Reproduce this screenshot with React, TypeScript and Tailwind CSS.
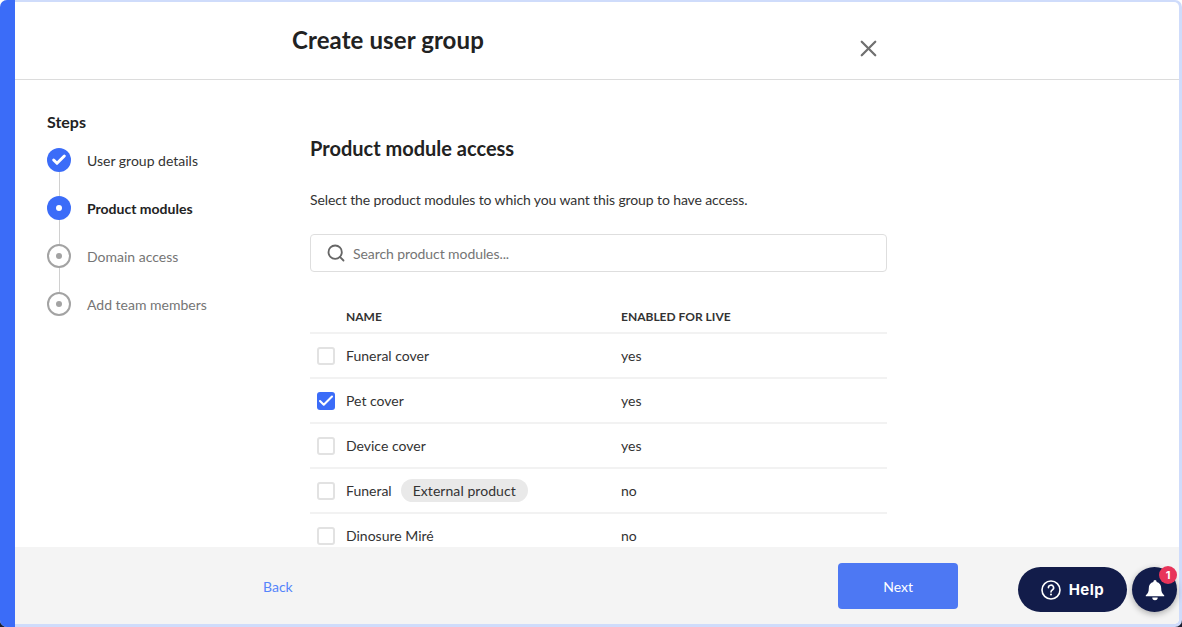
import { Check, X, Search } from "lucide-react";

const steps = [
  { label: "User group details", state: "done" },
  { label: "Product modules", state: "active" },
  { label: "Domain access", state: "todo" },
  { label: "Add team members", state: "todo" },
];

const rows = [
  { name: "Funeral cover", live: "yes", checked: false },
  { name: "Pet cover", live: "yes", checked: true },
  { name: "Device cover", live: "yes", checked: false },
  { name: "Funeral", live: "no", checked: false, badge: "External product" },
  { name: "Dinosure Miré", live: "no", checked: false },
];

function StepIcon({ state }: { state: string }) {
  if (state === "done")
    return (
      <span className="flex h-6 w-6 items-center justify-center rounded-full bg-[#3b6cf8]">
        <Check size={16} strokeWidth={4.4} className="text-white" />
      </span>
    );
  if (state === "active")
    return (
      <span className="flex h-6 w-6 items-center justify-center rounded-full bg-[#3b6cf8]">
        <span className="h-[6px] w-[6px] rounded-full bg-white" />
      </span>
    );
  return (
    <span className="flex h-6 w-6 items-center justify-center rounded-full border-2 border-[#a3a3a3] bg-white">
      <span className="h-[6px] w-[6px] rounded-full bg-[#a3a3a3]" />
    </span>
  );
}

export default function App() {
  return (
    <div className="relative h-[627px] w-[1182px] overflow-hidden bg-[linear-gradient(to_bottom,#ffffff_50%,#1b2030_50%)] font-['Lato',sans-serif] text-[#222222]">
      <div className="flex h-full w-full overflow-hidden rounded-[7px] bg-[#cfdcfb]">
        <div className="w-[15px] shrink-0 bg-[#3b6cf8]" />
        <div className="mb-[3px] mr-[3px] mt-[2px] flex min-w-0 flex-1 flex-col overflow-hidden rounded-r-[5px] bg-white">
          <header className="flex h-[78px] shrink-0 border-b border-[#dcdcdc] pl-[277px]">
            <h1 className="mt-[21px] text-[24px] font-bold leading-[34px] tracking-[0.1px]">Create user group</h1>
            <X size={27} strokeWidth={2} className="ml-[371.5px] mt-[32.5px] text-[#707070]" />
          </header>
          <div className="flex min-h-0 flex-1 overflow-hidden">
            <aside className="w-[295px] shrink-0 pl-[32px] pt-[32px]">
              <div className="text-[16px] font-bold leading-[20px]">Steps</div>
              <div className="relative mt-[4px]">
                <div className="absolute bottom-[24px] left-[11.5px] top-[24px] w-px bg-[#d0d0d0]" />
                {steps.map((s) => (
                  <div key={s.label} className="relative flex h-[48px] items-center">
                    <StepIcon state={s.state} />
                    <span
                      className={
                        "ml-4 text-[14px] " +
                        (s.state === "active"
                          ? "font-bold text-[#222222]"
                          : s.state === "done"
                            ? "text-[#333333]"
                            : "text-[#757575]")
                      }
                    >
                      {s.label}
                    </span>
                  </div>
                ))}
              </div>
            </aside>
            <main className="w-[577px] shrink-0 pt-[54px]">
              <h2 className="text-[20px] font-bold leading-[28px]">Product module access</h2>
              <p className="mt-[28px] text-[14px] leading-[20px] tracking-[-0.11px] text-[#333333]">
                Select the product modules to which you want this group to have access.
              </p>
              <div className="mt-[24px] flex h-[38px] items-center rounded-[4px] border border-[#dedede] pl-[15px]">
                <Search size={20} strokeWidth={2.2} className="text-[#666666]" />
                <span className="ml-[7px] text-[14px] tracking-[-0.08px] text-[#757575]">Search product modules...</span>
              </div>
              <div className="mt-[26px] flex h-[36px] items-center border-b-2 border-[#f2f2f2] pt-[4px] text-[12px] font-bold text-[#333333]">
                <span className="ml-[36px] w-[275px]">NAME</span>
                <span>ENABLED FOR LIVE</span>
              </div>
              {rows.map((r) => (
                <div
                  key={r.name}
                  className="flex h-[45px] items-center border-b-2 border-[#f2f2f2] text-[14px] text-[#333333]"
                >
                  <span className="ml-[7px] flex w-[29px] shrink-0">
                    {r.checked ? (
                      <span className="flex h-[18px] w-[18px] items-center justify-center rounded-[3px] bg-[#3b6cf8]">
                        <Check size={18} strokeWidth={2.8} className="text-white" />
                      </span>
                    ) : (
                      <span className="h-[18px] w-[18px] rounded-[3px] border-2 border-[#e2e2e2] bg-white" />
                    )}
                  </span>
                  <span className="flex w-[275px] shrink-0 items-center">
                    {r.name}
                    {r.badge && (
                      <span className="ml-[9px] rounded-full bg-[#e9e9e9] px-[12px] py-[2px] leading-[19px] tracking-[0.06px]">
                        {r.badge}
                      </span>
                    )}
                  </span>
                  <span>{r.live}</span>
                </div>
              ))}
            </main>
          </div>
          <footer className="flex h-[77px] shrink-0 items-center bg-[#f4f4f4] pl-[248px]">
            <span className="pt-[1px] text-[14px] text-[#5585fb]">Back</span>
            <button className="ml-[545px] h-[46px] w-[120px] rounded-[4px] bg-[#4d78f3] pl-[1px] pt-[1px] text-[14px] text-white">
              Next
            </button>
          </footer>
        </div>
      </div>
      <div className="absolute bottom-[15px] left-[1018px] flex h-[45px] w-[109px] items-center justify-center gap-[8px] rounded-full bg-[#121c4a] pt-[1px] font-['Inter',sans-serif] text-[15px] font-bold tracking-[0.5px] text-white">
        <svg width="20" height="20" viewBox="0 0 20 20" fill="none" stroke="currentColor" strokeWidth="1.6">
          <circle cx="10" cy="10" r="9" />
          <path d="M7.4 7.8a2.6 2.6 0 1 1 3.9 2.2c-.8.5-1.3 1-1.3 2" strokeLinecap="round" />
          <circle cx="10" cy="14.6" r="1" fill="currentColor" stroke="none" />
        </svg>
        Help
      </div>
      <div className="absolute bottom-[15px] left-[1132px] flex h-[45px] w-[45px] items-center justify-center rounded-full bg-[#121c4a] shadow-[0_2px_6px_rgba(0,0,0,0.3)]">
        <svg width="22" height="22" viewBox="0 0 22 22" fill="white">
          <path d="M11 1a1.6 1.6 0 0 1 1.6 1.6v.5c3 .7 4.600 3.200 4.600 6.200 0 3.900 1 5.400 3 7v1H1.800v-1c2-1.600 3-3.100 3-7 0-3 1.600-5.500 4.600-6.200v-.5A1.600 1.600 0 0 1 11 1Z" />
          <path d="M8.300 18.500h5.400a2.700 2.700 0 0 1-5.400 0Z" />
        </svg>
        <span className="absolute right-0 top-[-1px] flex h-[18px] w-[18px] items-center justify-center rounded-full bg-[#e8345a] font-['Inter',sans-serif] text-[11px] font-bold text-white">
          1
        </span>
      </div>
    </div>
  );
}
